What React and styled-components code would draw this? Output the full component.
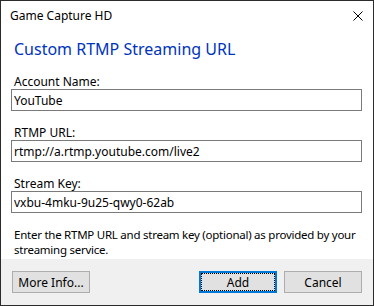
import styled, { createGlobalStyle } from "styled-components";

const GlobalStyle = createGlobalStyle`
  html, body {
    margin: 0;
    padding: 0;
    background: #ffffff;
  }
  body {
    font-family: "Segoe UI", "Noto Sans", "Open Sans", sans-serif;
    font-size: 12px;
    color: #000;
  }
`;

// the dialog frame
const Window = styled.div`
  width: 374px;
  height: 306px;
  box-sizing: border-box;
  border: 1px solid #2b2b2b;
  background: #fff;
  display: flex;
  flex-direction: column;
`;

const TitleBar = styled.div`
  height: 29px;
  display: flex;
  align-items: center;
  justify-content: space-between;
  padding: 0 9px 0 9px;
  font-size: 12px;
`;

const CloseIcon = styled.svg`
  width: 10px;
  height: 10px;
  margin-right: 1px;
  margin-top: 1px;
`;

const Body = styled.div`
  flex: 1;
  padding: 8px 11px 0 10px;
  display: flex;
  flex-direction: column;
`;

const Heading = styled.h1`
  margin: 1px 0 14px 3px;
  font-size: 16px;
  font-weight: 400;
  line-height: 21px;
  color: #0033bc;
`;

const Field = styled.div`
  display: flex;
  flex-direction: column;
  margin-bottom: 14px;
`;

const Label = styled.label`
  line-height: 15px;
  padding-left: 3px;
`;

const Input = styled.input`
  height: 22px;
  box-sizing: border-box;
  border: 1px solid #7a7a7a;
  padding: 0 2px;
  font: inherit;
  font-size: 12px;
  color: #000;
  outline: none;
`;

// the help text is a touch tighter than the fallback font sets it
const Note = styled.p`
  margin: 0;
  padding-left: 3px;
  line-height: 15px;
  font-size: 11.5px;
  letter-spacing: -0.25px;
  white-space: nowrap;
`;

const Footer = styled.div`
  height: 46px;
  background: #f0f0f0;
  display: flex;
  align-items: center;
  padding: 0 11px 0 11px;
  gap: 7px;
`;

const Button = styled.button`
  position: relative;
  width: 78px;
  height: 22px;
  box-sizing: border-box;
  background: #e1e1e1;
  border: ${(p) => (p.$focused ? "2px solid #0078d7" : "1px solid #adadad")};
  font: inherit;
  font-size: 12px;
  color: #000;
  padding: 0;
  margin-left: ${(p) => (p.$pushRight ? "auto" : "0")};

  ${(p) =>
    p.$focused &&
    `
    &::after {
      content: "";
      position: absolute;
      inset: 0;
      border: 1px dotted #000;
    }
  `}
`;

const App = () => {
  return (
    <>
      <GlobalStyle />
      <Window>
        <TitleBar>
          <span>Game Capture HD</span>
          <CloseIcon viewBox="0 0 10 10">
            <path d="M0.5 0.5 L9.5 9.5 M9.5 0.5 L0.5 9.5" stroke="#000" strokeWidth="1" fill="none" />
          </CloseIcon>
        </TitleBar>
        <Body>
          <Heading>Custom RTMP Streaming URL</Heading>
          <Field>
            <Label>Account Name:</Label>
            <Input defaultValue="YouTube" />
          </Field>
          <Field>
            <Label>RTMP URL:</Label>
            <Input defaultValue="rtmp://a.rtmp.youtube.com/live2" />
          </Field>
          <Field>
            <Label>Stream Key:</Label>
            <Input defaultValue="vxbu-4mku-9u25-qwy0-62ab" />
          </Field>
          <Note>
            Enter the RTMP URL and stream key (optional) as provided by your
            <br />
            streaming service.
          </Note>
        </Body>
        <Footer>
          <Button>More Info...</Button>
          <Button $focused $pushRight>
            Add
          </Button>
          <Button>Cancel</Button>
        </Footer>
      </Window>
    </>
  );
};

export default App;
